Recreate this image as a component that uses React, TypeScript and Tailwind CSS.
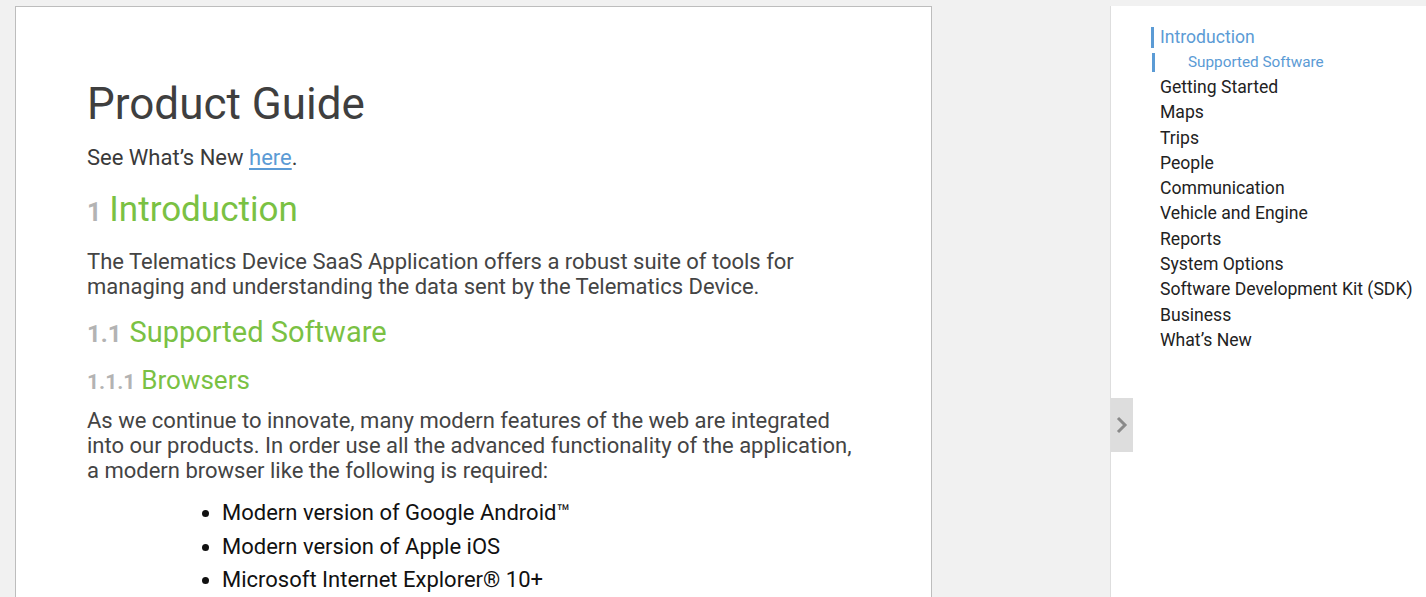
const tocItems = [
  "Getting Started",
  "Maps",
  "Trips",
  "People",
  "Communication",
  "Vehicle and Engine",
  "Reports",
  "System Options",
  "Software Development Kit (SDK)",
  "Business",
  "What’s New",
];

const browsers = [
  "Modern version of Google Android™",
  "Modern version of Apple iOS",
  "Microsoft Internet Explorer® 10+",
];

export default function App() {
  return (
    <div
      className="h-[597px] overflow-hidden bg-[#f1f1f1] flex pt-[6px] pl-[15px]"
      style={{ fontFamily: "Roboto, 'Liberation Sans', sans-serif" }}
    >
      <div className="w-[917px] h-[700px] bg-white border border-[#bdbdbd] pl-[71px] pt-[71px] shrink-0">
        <h1 className="text-[44px] leading-[52px] text-[#3f3f3f]">Product Guide</h1>
        <p className="mt-[14px] text-[22px] leading-[28px] text-[#3a3a3a]">
          See What’s New{" "}
          <a href="#" className="text-[#5b9bd5] underline underline-offset-[3px] decoration-2">
            here
          </a>
          .
        </p>

        <div className="mt-[18px] text-[35px] leading-[40px]">
          <span className="text-[#b3b3b3] font-bold text-[25px] mr-[8px]">1</span>
          <span className="text-[#7ac143]">Introduction</span>
        </div>
        <p className="mt-[16px] w-[770px] text-[22px] leading-[25px] text-[#444]">
          The Telematics Device SaaS Application offers a robust suite of tools for managing and
          understanding the data sent by the Telematics Device.
        </p>

        <div className="mt-[16px] text-[29px] leading-[34px]">
          <span className="text-[#b3b3b3] font-bold text-[24px] mr-[8px]">1.1</span>
          <span className="text-[#7ac143]">Supported Software</span>
        </div>

        <div className="mt-[14px] text-[26px] leading-[30px]">
          <span className="text-[#b3b3b3] font-bold text-[21px] mr-[6px]">1.1.1</span>
          <span className="text-[#7ac143]">Browsers</span>
        </div>
        <p className="mt-[11px] w-[770px] text-[22px] leading-[25px] text-[#444]">
          As we continue to innovate, many modern features of the web are integrated into our
          products. In order use all the advanced functionality of the application, a modern browser
          like the following is required:
        </p>

        <ul className="mt-[13px] pl-[135px] list-disc text-[22px] leading-[33.5px] text-[#111]">
          {browsers.map((b) => (
            <li key={b}>{b}</li>
          ))}
        </ul>
      </div>

      <div className="flex-1" />

      <div className="relative w-[316px] h-[700px] bg-white border-l border-[#dedede] shrink-0 pl-[40px] pt-[21px]">
        <ul>
          <li className="border-l-[3px] border-[#5b9bd5] pl-[6px] text-[17.6px] leading-[21px] text-[#5b9bd5]">
            Introduction
          </li>
          <li className="mt-[5px] ml-[1px] border-l-[3px] border-[#5b9bd5] pl-[33px] text-[15.3px] leading-[19px] text-[#5b9bd5]">
            Supported Software
          </li>
          {tocItems.map((t, i) => (
            <li
              key={t}
              className={`pl-[9px] text-[17.6px] leading-[25.3px] text-[#222] ${i === 0 ? "mt-[3px]" : ""}`}
            >
              {t}
            </li>
          ))}
        </ul>

        <div className="absolute left-0 top-[392px] w-[22px] h-[54px] bg-[#dddddd] flex items-center justify-center">
          <svg width="12" height="18" viewBox="0 0 12 18" fill="none">
            <polyline points="2,2 9,9 2,16" stroke="#8a8a8a" strokeWidth="3" />
          </svg>
        </div>
      </div>
    </div>
  );
}
